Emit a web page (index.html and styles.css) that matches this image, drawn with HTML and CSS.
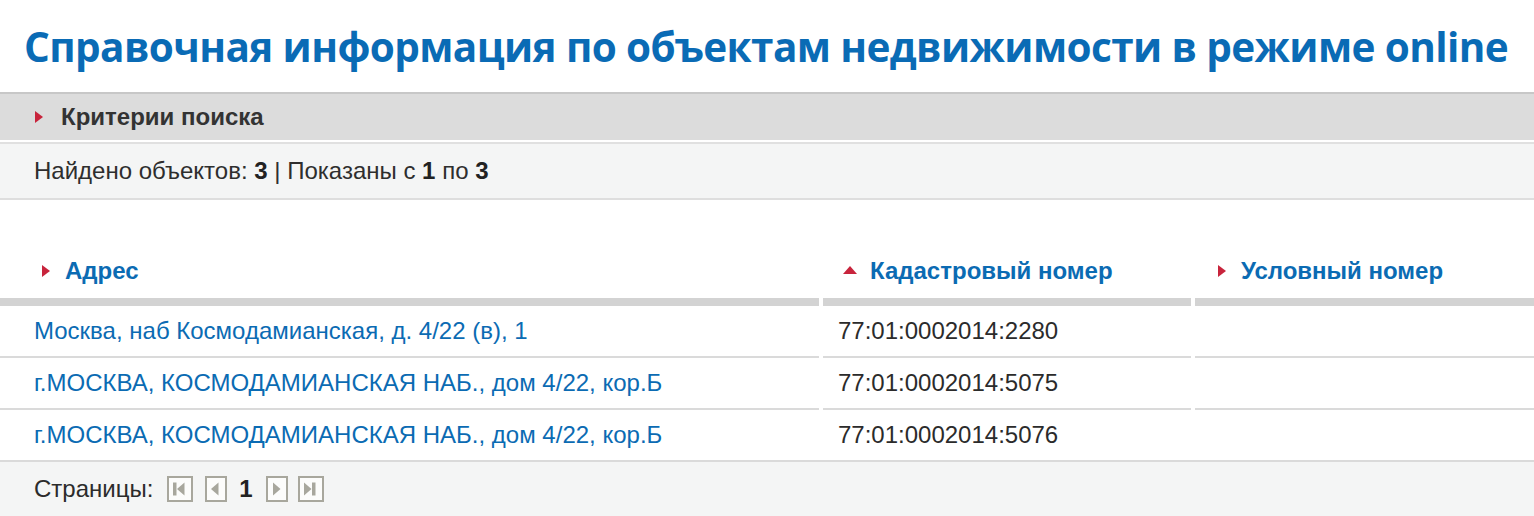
FILE: index.html
```html
<!DOCTYPE html>
<html lang="ru">
<head>
<meta charset="utf-8">
<title>Справочная информация</title>
<link rel="stylesheet" href="styles.css">
</head>
<body>
<h1 class="title">Справочная информация по объектам недвижимости в режиме online</h1>

<div class="criteria">
  <span class="arrow-right"></span>
  <span class="criteria-label">Критерии поиска</span>
</div>

<div class="info">Найдено объектов: <b>3</b> | Показаны с <b>1</b> по <b>3</b></div>

<div class="grid">
  <div class="head"><span class="arrow-right"></span><a href="#">Адрес</a></div>
  <div class="head head-2"><span class="arrow-up"></span><a href="#">Кадастровый номер</a></div>
  <div class="head head-3"><span class="arrow-right"></span><a href="#">Условный номер</a></div>

  <div class="cell"><a href="#">Москва, наб Космодамианская, д. 4/22 (в), 1</a></div>
  <div class="cell cell-2">77:01:0002014:2280</div>
  <div class="cell"></div>

  <div class="cell"><a href="#">г.МОСКВА, КОСМОДАМИАНСКАЯ НАБ., дом 4/22, кор.Б</a></div>
  <div class="cell cell-2">77:01:0002014:5075</div>
  <div class="cell"></div>

  <div class="cell last"><a href="#">г.МОСКВА, КОСМОДАМИАНСКАЯ НАБ., дом 4/22, кор.Б</a></div>
  <div class="cell cell-2 last">77:01:0002014:5076</div>
  <div class="cell last"></div>
</div>

<div class="pager">
  <span class="pager-label">Страницы:</span>
  <span class="pbtn first"><svg width="26" height="26" viewBox="0 0 26 26"><rect x="1" y="1" width="24" height="24" fill="#fcfcfb" stroke="#a8a79d" stroke-width="2"/><rect x="6" y="6.5" width="3.5" height="13" fill="#a8a79d"/><path d="M17.5 6.5 L10 13 L17.5 19.5 Z" fill="#a8a79d"/></svg></span>
  <span class="pbtn prev"><svg width="22" height="26" viewBox="0 0 22 26"><rect x="1" y="1" width="20" height="24" fill="#fcfcfb" stroke="#a8a79d" stroke-width="2"/><path d="M13.5 6.5 L6 13 L13.5 19.5 Z" fill="#a8a79d"/></svg></span>
  <span class="pnum">1</span>
  <span class="pbtn next"><svg width="22" height="26" viewBox="0 0 22 26"><rect x="1" y="1" width="20" height="24" fill="#fcfcfb" stroke="#a8a79d" stroke-width="2"/><path d="M7 6.5 L14.5 13 L7 19.5 Z" fill="#a8a79d"/></svg></span>
  <span class="pbtn last-btn"><svg width="26" height="26" viewBox="0 0 26 26"><rect x="1" y="1" width="24" height="24" fill="#fcfcfb" stroke="#a8a79d" stroke-width="2"/><path d="M6 6.5 L13.5 13 L6 19.5 Z" fill="#a8a79d"/><rect x="14" y="6.5" width="3.5" height="13" fill="#a8a79d"/></svg></span>
</div>
</body>
</html>
```

FILE: styles.css
```css
html, body {
  margin: 0;
  padding: 0;
  background: #fff;
  font-family: "Liberation Sans", Arial, sans-serif;
  font-size: 24px;
  color: #2b2b2b;
}

.title {
  margin: 0;
  height: 92px;
  box-sizing: border-box;
  padding: 20px 0 0 24px;
  font-family: "Open Sans", "Noto Sans", sans-serif;
  font-weight: 700;
  font-size: 40.5px;
  line-height: 54px;
  letter-spacing: -0.6px;
  color: #0a6bb5;
  white-space: nowrap;
}

.criteria {
  display: flex;
  align-items: center;
  height: 46px;
  background: #dcdcdc;
  border-top: 2px solid #c7c7c7;
  padding-left: 35px;
}

.criteria-label {
  font-weight: 700;
  font-size: 24px;
  color: #333;
  margin-left: 18px;
}

.arrow-right {
  display: inline-block;
  width: 0;
  height: 0;
  border-top: 6.5px solid transparent;
  border-bottom: 6.5px solid transparent;
  border-left: 8px solid #c8243c;
}

.arrow-up {
  display: inline-block;
  width: 0;
  height: 0;
  border-left: 7px solid transparent;
  border-right: 7px solid transparent;
  border-bottom: 8px solid #c8243c;
}

.info {
  margin-top: 2px;
  border-top: 2px solid #e0e0e0;
  border-bottom: 2px solid #dedede;
  background: #f4f5f5;
  height: 54px;
  line-height: 54px;
  padding-left: 34px;
  color: #2e2e2e;
}

.info b {
  color: #222;
}

.grid {
  display: grid;
  grid-template-columns: 819px 368px 1fr;
  column-gap: 4px;
}

a {
  color: #0b6bb3;
  text-decoration: none;
}

.head {
  height: 106px;
  box-sizing: border-box;
  display: flex;
  align-items: center;
  padding-top: 44px;
  padding-left: 42px;
  border-bottom: 8px solid #d3d3d3;
}

.head a {
  font-weight: 700;
  margin-left: 15px;
}

.head-2 {
  padding-left: 20px;
}

.head-2 .arrow-up {
  margin-bottom: 2px;
}

.head-2 a {
  margin-left: 13px;
}

.head-3 {
  padding-left: 23px;
}

.cell {
  height: 52px;
  box-sizing: border-box;
  display: flex;
  align-items: center;
  padding-left: 34px;
  border-bottom: 2px solid #dadada;
}

.cell.last {
  border-bottom: 0;
  height: 50px;
}

.cell-2 {
  padding-left: 15px;
  color: #2b2b2b;
}

.pager {
  display: flex;
  align-items: center;
  height: 54px;
  background: #f4f5f5;
  border-top: 2px solid #dadada;
  padding-left: 34px;
}

.pager-label {
  margin-right: 14px;
}

.pbtn {
  display: inline-flex;
}

.first {
  margin-right: 12px;
}

.prev {
  margin-right: 12px;
}

.pnum {
  font-weight: 700;
  font-size: 24px;
  color: #222;
  margin-right: 13px;
}

.next {
  margin-right: 10px;
}
```
